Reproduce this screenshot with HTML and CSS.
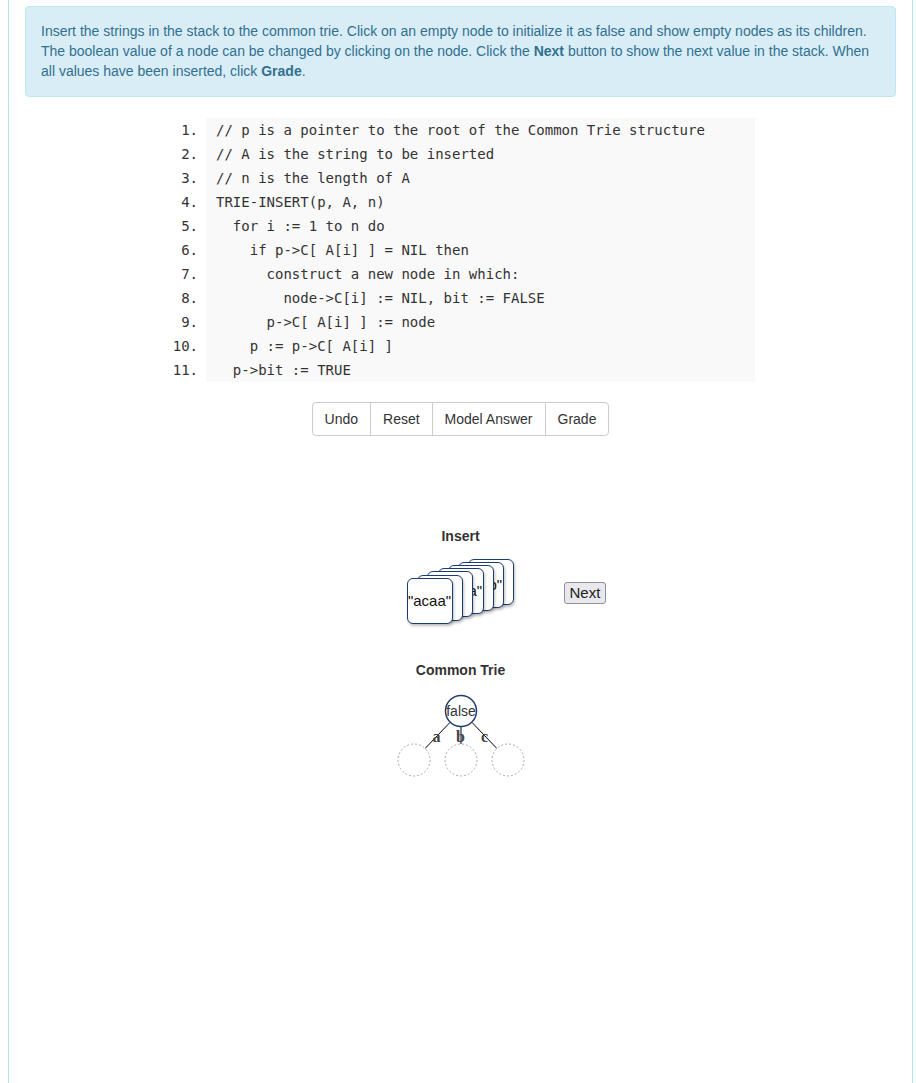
FILE: index.html
```html
<!DOCTYPE html>
<html>
<head>
<meta charset="utf-8">
<title>Common Trie</title>
<link rel="stylesheet" href="styles.css">
</head>
<body>
<div class="frame">
  <div class="alert">
    Insert the strings in the stack to the common trie. Click on an empty node to initialize it as false and show empty nodes as its children. The boolean value of a node can be changed by clicking on the node. Click the <b>Next</b> button to show the next value in the stack. When all values have been inserted, click <b>Grade</b>.
  </div>

  <div class="code">
    <div class="num">1.</div><div class="line">// p is a pointer to the root of the Common Trie structure</div>
    <div class="num">2.</div><div class="line">// A is the string to be inserted</div>
    <div class="num">3.</div><div class="line">// n is the length of A</div>
    <div class="num">4.</div><div class="line">TRIE-INSERT(p, A, n)</div>
    <div class="num">5.</div><div class="line">  for i := 1 to n do</div>
    <div class="num">6.</div><div class="line">    if p-&gt;C[ A[i] ] = NIL then</div>
    <div class="num">7.</div><div class="line">      construct a new node in which:</div>
    <div class="num">8.</div><div class="line">        node-&gt;C[i] := NIL, bit := FALSE</div>
    <div class="num">9.</div><div class="line">      p-&gt;C[ A[i] ] := node</div>
    <div class="num">10.</div><div class="line">    p := p-&gt;C[ A[i] ]</div>
    <div class="num">11.</div><div class="line">  p-&gt;bit := TRUE</div>
  </div>

  <div class="btn-group">
    <button class="btn">Undo</button><button class="btn">Reset</button><button class="btn">Model Answer</button><button class="btn">Grade</button>
  </div>

  <div class="section-title insert-title">Insert</div>
  <div class="stack-row">
    <div></div>
    <div class="stack">
      <div class="card c6"><span>"c"</span></div>
      <div class="card c5"><span>"abcb"</span></div>
      <div class="card c4"><span>"b"</span></div>
      <div class="card c3"><span>"bcaa"</span></div>
      <div class="card c2"><span>"ca"</span></div>
      <div class="card c1"><span>"ab"</span></div>
      <div class="card c0"><span>"acaa"</span></div>
    </div>
    <div class="next-cell"><button class="next">Next</button></div>
  </div>

  <div class="section-title trie-title">Common Trie</div>
  <svg class="trie" width="140" height="100" viewBox="0 0 140 100">
    <line x1="58.9" y1="41.5" x2="34.1" y2="67.5" class="edge"/>
    <line x1="70" y1="46" x2="70" y2="63" class="edge"/>
    <line x1="81.1" y1="41.5" x2="105.9" y2="67.5" class="edge"/>
    <text x="45.5" y="61" class="lbl">a</text>
    <text x="69.5" y="61" class="lbl">b</text>
    <text x="93.5" y="61" class="lbl">c</text>
    <circle cx="70" cy="30" r="15.5" class="root"/>
    <text x="70" y="35" class="val">false</text>
    <circle cx="23" cy="79" r="16" class="empty"/>
    <circle cx="70" cy="79" r="16" class="empty"/>
    <circle cx="117" cy="79" r="16" class="empty"/>
  </svg>
</div>
</body>
</html>
```

FILE: styles.css
```css
html, body {
  margin: 0;
  padding: 0;
  background: #fff;
}

body {
  font-family: "Liberation Sans", Arial, sans-serif;
  font-size: 14px;
  line-height: 20px;
  color: #333;
}

.frame {
  margin-left: 8px;
  width: 905px;
  min-height: 1083px;
  box-sizing: border-box;
  border-left: 1px solid #b3e5f0;
  border-right: 1px solid #b3e5f0;
  padding: 6px 16px 0 16px;
}

.alert {
  background: #d9edf7;
  border: 1px solid #bce8f1;
  border-radius: 4px;
  color: #31708f;
  padding: 14px 15px 15px 15px;
}

.alert b {
  font-weight: bold;
}

.code {
  display: grid;
  grid-template-columns: 40px 549px;
  width: 589px;
  margin: 21px auto 0;
  font-family: "DejaVu Sans Mono", monospace;
  font-size: 14px;
  line-height: 24px;
  color: #333;
}

.num {
  text-align: right;
  padding-right: 8px;
}

.line {
  background: #f9f9f9;
  padding-left: 10px;
  white-space: pre;
}

.btn-group {
  display: flex;
  justify-content: center;
  margin-top: 20px;
}

.btn {
  font-family: "Liberation Sans", Arial, sans-serif;
  font-size: 14px;
  line-height: 20px;
  color: #333;
  background: #fff;
  border: 1px solid #ccc;
  padding: 6px 12px;
  margin: 0;
  margin-left: -1px;
}

.btn:first-child {
  border-radius: 4px 0 0 4px;
  margin-left: 0;
}

.btn:last-child {
  border-radius: 0 4px 4px 0;
}

.section-title {
  text-align: center;
  font-weight: bold;
  color: #333;
}

.insert-title {
  margin-top: 90px;
}

.stack-row {
  display: grid;
  grid-template-columns: 1fr 108px 1fr;
  margin-top: 13px;
  align-items: center;
}

.stack {
  position: relative;
  height: 66px;
}

.card {
  position: absolute;
  width: 44px;
  height: 44px;
  border: 1.5px solid #1d3c6e;
  border-radius: 6px;
  background: #fff;
  box-shadow: 1px 2px 3px rgba(0, 0, 0, 0.25);
  display: flex;
  align-items: center;
  justify-content: center;
  white-space: nowrap;
  font-size: 15px;
  color: #111;
}

.c0 { left: 0; top: 19px; }
.c1 { left: 10px; top: 15.5px; }
.c2 { left: 20.5px; top: 12px; }
.c3 { left: 31px; top: 9px; }
.c4 { left: 41px; top: 6px; }
.c5 { left: 51px; top: 3px; }
.c6 { left: 61px; top: 0; }

.next-cell {
  padding-left: 49px;
}

.next {
  font-family: "Liberation Sans", Arial, sans-serif;
  font-size: 15px;
  line-height: 18px;
  color: #222;
  background: #e9e9ed;
  border: 1px solid #8f8f9d;
  border-radius: 3px;
  padding: 1px 5px;
  margin: 0;
  position: relative;
  top: 1px;
}

.trie-title {
  margin-top: 35px;
}

.trie {
  display: block;
  margin: 1px auto 0;
}

.edge {
  stroke: #000;
  stroke-width: 1;
}

.lbl {
  font-family: "Liberation Serif", serif;
  font-size: 16px;
  font-weight: bold;
  fill: #444;
  text-anchor: middle;
}

.root {
  fill: #fff;
  stroke: #1d3c6e;
  stroke-width: 1.5;
}

.val {
  font-family: "Liberation Sans", Arial, sans-serif;
  font-size: 14px;
  fill: #333;
  text-anchor: middle;
}

.empty {
  fill: #fff;
  stroke: #aaa;
  stroke-width: 1;
  stroke-dasharray: 2 2;
}
```
